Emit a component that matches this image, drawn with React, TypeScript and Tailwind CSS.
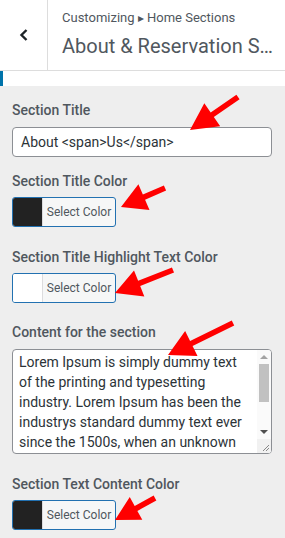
import React from "react";

type Pt = [number, number];

// red annotation arrow, from tail to tip
function Arrow({ tail, tip, head = 27, half = 14, shaft = 2.8 }: { tail: Pt; tip: Pt; head?: number; half?: number; shaft?: number }) {
  const dx = tip[0] - tail[0];
  const dy = tip[1] - tail[1];
  const len = Math.hypot(dx, dy);
  const ux = dx / len;
  const uy = dy / len;
  const nx = -uy;
  const ny = ux;
  const bx = tip[0] - ux * head;
  const by = tip[1] - uy * head;
  const pts: Pt[] = [
    [tail[0] + nx * shaft, tail[1] + ny * shaft],
    [bx + nx * shaft, by + ny * shaft],
    [bx + nx * half, by + ny * half],
    tip,
    [bx - nx * half, by - ny * half],
    [bx - nx * shaft, by - ny * shaft],
    [tail[0] - nx * shaft, tail[1] - ny * shaft],
  ];
  return <polygon points={pts.map((p) => p.join(",")).join(" ")} fill="#ff0000" />;
}

function Label({ children }: { children: React.ReactNode }) {
  return <div className="text-[14px] leading-[20px] font-medium text-[#50575e]">{children}</div>;
}

function ColorButton({ swatch }: { swatch: string }) {
  return (
    <div className="mt-[6px] flex h-[30px] w-[104px] overflow-hidden rounded-[3px] border border-[#2271b1] bg-[#f6f7f7]">
      <div className="w-[30px] border-r border-[#dcdcde]" style={{ background: swatch }} />
      <div className="flex flex-1 items-center justify-center text-[12px] text-[#50575e]">Select Color</div>
    </div>
  );
}

const lorem =
  "Lorem Ipsum is simply dummy text of the printing and typesetting industry. Lorem Ipsum has been the industrys standard dummy text ever since the 1500s, when an unknown printer took a galley of type and scrambled it to make a type specimen book.";

export default function App() {
  return (
    <div className="relative h-[538px] w-[285px] overflow-hidden bg-[#eeeeee] font-['Roboto',sans-serif]">
      {/* header */}
      <div className="flex h-[71px] border-b border-[#dddddd] bg-white">
        <div className="flex w-[48px] items-center justify-center border-r border-[#dddddd]">
          <svg width="10" height="14" viewBox="0 0 10 14">
            <polyline points="7.5,2 2.5,7 7.5,12" fill="none" stroke="#1d2327" strokeWidth="2.4" />
          </svg>
        </div>
        <div className="min-w-0 flex-1 pl-[14px] pr-[10px] pt-[9px]">
          <div className="text-[13px] leading-[18px] text-[#50575e]">
            Customizing <span className="text-[12px]">▸</span> Home Sections
          </div>
          <div className="mt-[6px] truncate text-[20px] leading-[26px] text-[#50575e]">About &amp; Reservation Section</div>
        </div>
      </div>
      <div className="h-[15px] bg-white">
        <div className="h-full w-[3px] bg-[#0073aa]" />
      </div>

      <div className="px-[12px] pt-[14px] pr-[13px]">
        <Label>Section Title</Label>
        <div className="mt-[7px] flex h-[30px] items-center rounded-[4px] border border-[#8c8f94] bg-white px-[8px] text-[14px] text-[#2c3338]">
          About &lt;span&gt;Us&lt;/span&gt;
        </div>

        <div className="mt-[14px]">
          <Label>Section Title Color</Label>
          <ColorButton swatch="#222222" />
        </div>

        <div className="mt-[20px]">
          <Label>Section Title Highlight Text Color</Label>
          <ColorButton swatch="#ffffff" />
        </div>

        <div className="mt-[19px]">
          <Label>Content for the section</Label>
          <div className="mt-[7px] flex h-[105px] overflow-hidden rounded-[4px] border border-[#8c8f94] bg-white">
            <div className="h-full flex-1 overflow-hidden pl-[6px] pr-[8px] pt-[2px] text-[14px] leading-[20px] text-[#2c3338]">{lorem}</div>
            <div className="flex w-[14px] flex-col bg-[#fafafa]">
              <div className="flex h-[14px] items-center justify-center">
                <div className="h-0 w-0 border-x-[4px] border-b-[4px] border-x-transparent border-b-[#a3a3a3]" />
              </div>
              <div className="mx-[2px] h-[38px] bg-[#c1c1c1]" />
              <div className="flex-1" />
              <div className="flex h-[14px] items-center justify-center">
                <div className="h-0 w-0 border-x-[4px] border-t-[4px] border-x-transparent border-t-[#505050]" />
              </div>
              <div className="relative h-[14px] bg-[#f1f1f1]">
                <svg className="absolute right-[1px] bottom-[1px]" width="8" height="8" viewBox="0 0 8 8">
                  <line x1="1" y1="7" x2="7" y2="1" stroke="#888" strokeWidth="1" />
                  <line x1="4" y1="7" x2="7" y2="4" stroke="#888" strokeWidth="1" />
                </svg>
              </div>
            </div>
          </div>
        </div>

        <div className="mt-[20px]">
          <Label>Section Text Content Color</Label>
          <ColorButton swatch="#222222" />
        </div>
      </div>

      {/* annotation arrows */}
      <svg className="pointer-events-none absolute left-0 top-0" width="285" height="538">
        <Arrow tail={[238, 97]} tip={[190, 130]} />
        <Arrow tail={[165, 188]} tip={[121, 207]} head={25} />
        <Arrow tail={[173, 270]} tip={[115, 293]} head={26} />
        <Arrow tail={[233, 323]} tip={[168, 355]} head={26} />
        <Arrow tail={[155, 498]} tip={[115, 520]} head={24} half={13} />
      </svg>
    </div>
  );
}
